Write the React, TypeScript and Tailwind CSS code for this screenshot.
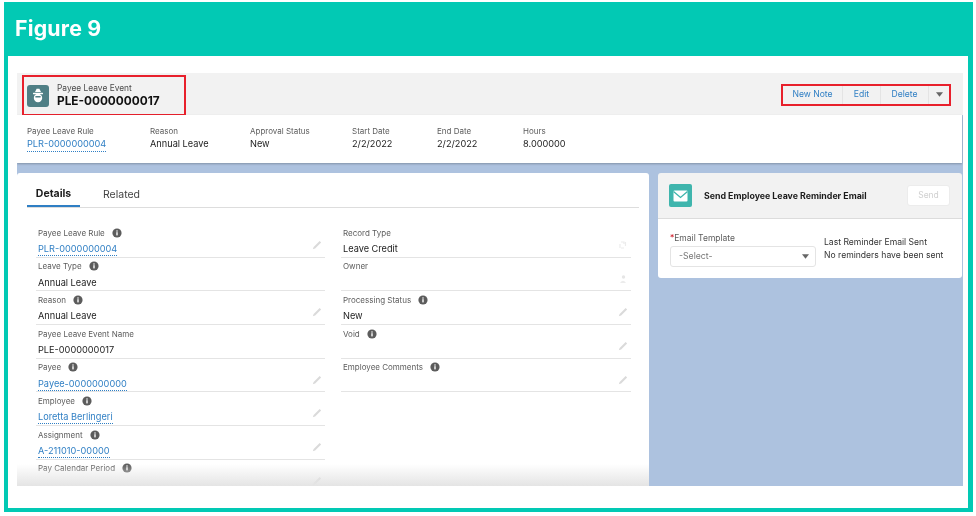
import React from "react";

const font = { fontFamily: '"Inter", "Liberation Sans", sans-serif' };

function Info() {
  return (
    <svg width="10" height="10" viewBox="0 0 10 10" className="shrink-0">
      <circle cx="5" cy="5" r="4.6" fill="#5c5c5c" />
      <rect x="4.2" y="4.2" width="1.6" height="3.2" fill="#e8e8e8" />
      <rect x="4.2" y="2.4" width="1.6" height="1.2" fill="#e8e8e8" />
    </svg>
  );
}

function Pencil() {
  return (
    <svg width="10" height="10" viewBox="0 0 10 10" className="shrink-0">
      <path d="M0.8 9.2 L1.6 6.9 L7.6 0.9 L9.1 2.4 L3.1 8.4 Z" fill="#dadada" />
    </svg>
  );
}

function Caret({ color = "#666" }: { color?: string }) {
  return (
    <svg width="7" height="5" viewBox="0 0 7 5">
      <path d="M0 0.3 H7 L3.5 4.7 Z" fill={color} />
    </svg>
  );
}

function Lock() {
  return (
    <svg width="10" height="10" viewBox="0 0 10 10" className="shrink-0">
      <path d="M3 2 H6 V4 M7.5 2 V6 M6 8 H3 M2 4 V8" stroke="#ececec" strokeWidth="1.2" fill="none" />
    </svg>
  );
}

function Owner() {
  return (
    <svg width="10" height="10" viewBox="0 0 10 10" className="shrink-0">
      <circle cx="5.5" cy="3" r="1.7" fill="#e6e6e6" />
      <path d="M2 9 Q5 4.5 8 9 Z" fill="#ececec" />
    </svg>
  );
}

type Row = { label: string; value?: string; link?: boolean; info?: boolean; icon?: "pencil" | "lock" | "owner" | "none" };

const left: Row[] = [
  { label: "Payee Leave Rule", value: "PLR-0000000004", link: true, info: true, icon: "pencil" },
  { label: "Leave Type", value: "Annual Leave", info: true, icon: "none" },
  { label: "Reason", value: "Annual Leave", info: true, icon: "pencil" },
  { label: "Payee Leave Event Name", value: "PLE-0000000017", icon: "none" },
  { label: "Payee", value: "Payee-0000000000", link: true, info: true, icon: "pencil" },
  { label: "Employee", value: "Loretta Berlingeri", link: true, info: true, icon: "pencil" },
  { label: "Assignment", value: "A-211010-00000", link: true, info: true, icon: "pencil" },
  { label: "Pay Calendar Period", info: true, icon: "pencil" },
];

const right: Row[] = [
  { label: "Record Type", value: "Leave Credit", icon: "lock" },
  { label: "Owner", icon: "owner" },
  { label: "Processing Status", value: "New", info: true, icon: "pencil" },
  { label: "Void", info: true, icon: "pencil" },
  { label: "Employee Comments", info: true, icon: "pencil" },
];

function Field({ row }: { row: Row }) {
  return (
    <div className="h-[33.7px] border-b border-[#e4e4e4] pl-[2px] pr-[3px] flex flex-col">
      <div className="h-[16px] pt-[1px] flex items-center gap-[7px] text-[8px] text-[#5c5c5c]">
        <span>{row.label}</span>
        {row.info && <Info />}
      </div>
      <div className="flex-1 flex items-start justify-between pt-[2px]">
        <span
          className={
            row.link
              ? "text-[9.2px] leading-[13px] text-[#2f7fc4] border-b border-dotted border-[#2f7fc4]"
              : "text-[9.2px] leading-[13px] text-[#1c1c1c]"
          }
        >
          {row.value}
        </span>
        <span className="-mt-[2px]">
          {row.icon === "pencil" && <Pencil />}
          {row.icon === "lock" && <Lock />}
          {row.icon === "owner" && <Owner />}
        </span>
      </div>
    </div>
  );
}

function Stat({ label, value, link, w }: { label: string; value: string; link?: boolean; w: string }) {
  return (
    <div className={`${w} flex flex-col`}>
      <span className="text-[8px] leading-[12px] text-[#5c5c5c]">{label}</span>
      <span
        className={
          link
            ? "self-start text-[9.2px] leading-[14px] text-[#2f7fc4] border-b border-dotted border-[#2f7fc4]"
            : "text-[9.2px] leading-[14px] text-[#1c1c1c]"
        }
      >
        {value}
      </span>
    </div>
  );
}

export default function App() {
  return (
    <div className="w-[976px] h-[516px] bg-white pt-[2px] pl-[4px] pr-[3px] pb-[4px]" style={font}>
      <div className="h-full flex flex-col bg-[#02c9b4] pl-[4px] pr-[5px] pb-[4px] blur-[0.3px]">
        <div className="h-[54px] shrink-0 flex items-center pl-[7px] pb-[1px]">
          <span className="text-[21.3px] font-bold text-white tracking-[0.2px]">Figure 9</span>
        </div>
        <div className="flex-1 min-h-0 bg-white pt-[17px] pl-[9px] pr-[5px] pb-[22px]">
          <div className="h-full flex flex-col bg-[#adc2df] overflow-hidden">
            {/* Highlights header */}
            <div className="h-[42px] shrink-0 bg-[#f2f2f2] flex items-center justify-between pl-[5px] pr-[12px]">
              <div className="h-[41px] w-[164px] mt-[3px] border-2 border-[#e8202c] flex items-center pl-[3px] gap-[8px]">
                <div className="w-[22px] h-[22px] rounded-[3px] bg-[#4f7f85] flex items-center justify-center">
                  <svg width="14" height="15" viewBox="0 0 14 15">
                    <path d="M5.6 0.8 H8.4 L10 4 H4 Z" fill="#fff" />
                    <rect x="2" y="4.8" width="10" height="1.5" rx="0.5" fill="#fff" />
                    <circle cx="7" cy="10" r="4.2" fill="#fff" />
                    <rect x="4.4" y="8" width="5.2" height="1.5" fill="#4f7f85" />
                  </svg>
                </div>
                <div className="flex flex-col">
                  <span className="text-[8.4px] leading-[11px] text-[#4a4a4a]">Payee Leave Event</span>
                  <span className="text-[11.8px] leading-[15px] font-bold text-[#111]">PLE-0000000017</span>
                </div>
              </div>
              <div className="h-[22px] w-[170px] mt-[1px] border-2 border-[#e8202c] flex items-center text-[8.6px] text-[#2f7fc4]">
                <span className="w-[60px] h-full flex items-center justify-center border-r border-[#e4e4e4]">New Note</span>
                <span className="w-[38px] h-full flex items-center justify-center border-r border-[#e4e4e4]">Edit</span>
                <span className="w-[48px] h-full flex items-center justify-center border-r border-[#e4e4e4]">Delete</span>
                <span className="flex-1 flex items-center justify-center">
                  <Caret />
                </span>
              </div>
            </div>
            {/* Details strip */}
            <div className="h-[48px] shrink-0 bg-white flex items-start pl-[10px] pt-[10px] mr-[1px] shadow-[0_1px_2px_rgba(0,0,0,0.25)]">
              <Stat w="w-[123px]" label="Payee Leave Rule" value="PLR-0000000004" link />
              <Stat w="w-[100px]" label="Reason" value="Annual Leave" />
              <Stat w="w-[102px]" label="Approval Status" value="New" />
              <Stat w="w-[85px]" label="Start Date" value="2/2/2022" />
              <Stat w="w-[86px]" label="End Date" value="2/2/2022" />
              <Stat w="w-[80px]" label="Hours" value="8.000000" />
            </div>
            {/* Body */}
            <div className="flex-1 min-h-0 flex pt-[10px] gap-[9px] pr-[1px]">
              <div className="relative w-[632px] shrink-0 bg-white rounded-t-[3px] overflow-hidden">
                <div className="h-[35px] mx-[10px] border-b border-[#dddddd] flex items-end gap-[23px] text-[10.5px]">
                  <span className="w-[53px] h-[35px] flex items-center justify-center font-bold text-[#1c1c1c] border-b-2 border-[#2f7fc4] pt-[10px]">
                    Details
                  </span>
                  <span className="h-[35px] flex items-center text-[#444] pt-[10px]">Related</span>
                </div>
                <div className="flex pt-[16px] pl-[19px] gap-[16px]">
                  <div className="w-[289px] flex flex-col">
                    {left.map((r) => (
                      <Field key={r.label} row={r} />
                    ))}
                  </div>
                  <div className="w-[290px] flex flex-col">
                    {right.map((r) => (
                      <Field key={r.label} row={r} />
                    ))}
                  </div>
                </div>
                <div className="absolute left-0 right-0 bottom-0 h-[22px] bg-gradient-to-b from-transparent to-[#e4e4e4]" />
              </div>
              <div className="flex-1 flex flex-col">
                <div className="h-[46px] shrink-0 bg-[#f2f2f2] border-b border-[#dcdcdc] rounded-t-[3px] flex items-center pl-[11px] pr-[12px]">
                  <div className="w-[23px] h-[23px] rounded-[2px] bg-[#3fb5ad] flex items-center justify-center">
                    <svg width="15" height="12" viewBox="0 0 15 12">
                      <rect x="0.5" y="0.5" width="14" height="11" rx="1" fill="#fff" />
                      <path d="M0.5 1.5 L7.5 7.5 L14.5 1.5" stroke="#3fb5ad" strokeWidth="1.3" fill="none" />
                    </svg>
                  </div>
                  <span className="ml-[12px] text-[8.8px] font-bold text-[#1c1c1c] whitespace-nowrap">
                    Send Employee Leave Reminder Email
                  </span>
                  <span className="ml-auto w-[43px] h-[21px] rounded-[3px] bg-white border border-[#ececec] flex items-center justify-center text-[8.5px] text-[#d0d0d0]">
                    Send
                  </span>
                </div>
                <div className="h-[59px] shrink-0 bg-white rounded-b-[3px] flex pl-[12px] pt-[14px]">
                  <div className="w-[146px] shrink-0">
                    <div className="text-[8.5px] leading-[11px] text-[#5c5c5c]">
                      <span className="text-[#d0202c]">*</span>Email Template
                    </div>
                    <div className="mt-[2px] h-[21px] w-[146px] rounded-[3px] border border-[#e4e4e4] flex items-center justify-between pl-[8px] pr-[6px] text-[8.7px] text-[#777]">
                      <span>-Select-</span>
                      <Caret />
                    </div>
                  </div>
                  <div className="ml-[8px] text-[8.6px] leading-[13px] text-[#333] pt-[3px] whitespace-nowrap">
                    <div>Last Reminder Email Sent</div>
                    <div>No reminders have been sent</div>
                  </div>
                </div>
              </div>
            </div>
          </div>
        </div>
      </div>
    </div>
  );
}
